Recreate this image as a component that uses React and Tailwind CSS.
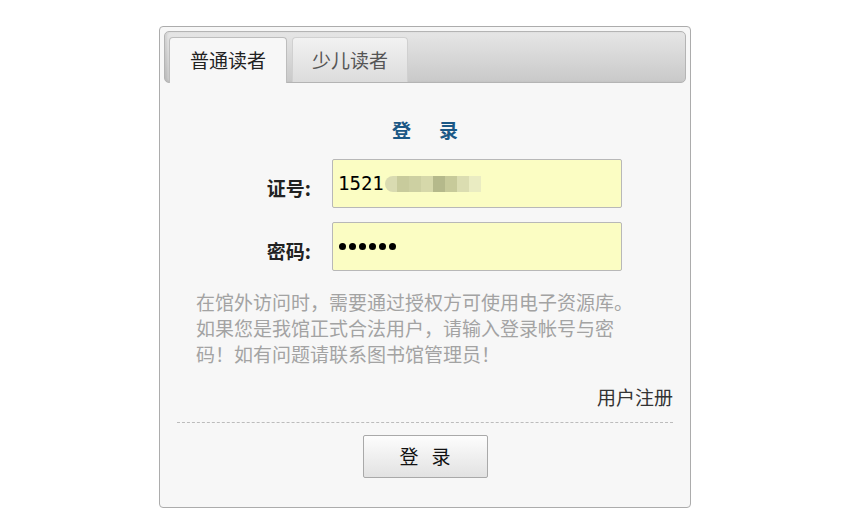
import React from "react";

const cjk = "font-['Noto_Sans_CJK_SC',sans-serif]";

const LoginPanel = () => {
  const blurBlocks = ["#d6d8b0", "#c3c698", "#c9cc9f", "#d2d5a8", "#aeb286", "#c2c596", "#d8dab0", "#e9ebc2"];

  return (
    <div className={`w-[532px] h-[482px] ml-[159px] mt-[26px] border border-[#acacac] rounded-[4px] bg-[#f7f7f7] px-[4px] pt-[4px] ${cjk}`}>
      {/* tabs header */}
      <div className="h-[52px] border border-[#b4b4b4] rounded-[5px] bg-gradient-to-b from-[#e6e6e6] to-[#c9c9c9] shadow-[inset_2px_0_2px_rgba(0,0,0,0.08)] flex items-end gap-[5px] pl-[4px]">
        <div className="-mb-px h-[46px] w-[118px] border border-b-0 border-[#bdbdbd] rounded-t-[4px] bg-[#f7f7f7] flex items-center justify-center text-[19px] text-[#222]">
          普通读者
        </div>
        <div className="h-[45px] w-[116px] border border-b-0 border-[#d0d0d0] rounded-t-[4px] bg-gradient-to-b from-[#f2f2f2] to-[#dcdcdc] flex items-center justify-center text-[19px] text-[#555]">
          少儿读者
        </div>
      </div>

      <div className="px-[13px]">
        {/* title */}
        <div className="mt-[34px] h-[26px] leading-[26px] flex justify-center gap-[28px] text-[19px] font-bold text-[#1b5886]">
          <span>登</span>
          <span>录</span>
        </div>

        {/* form */}
        <div className="mt-[16px] flex items-center">
          <div className="w-[155px] pr-[21px] text-right text-[19px] font-bold text-[#222] pt-[10px]">证号:</div>
          <div className="w-[290px] h-[49px] border border-[#b8b8b8] rounded-[2px] bg-[#fbfdc3] flex items-center pl-[5px]">
            <span className="font-['DejaVu_Sans_Mono',monospace] text-[19px] text-black">1521</span>
            <div className="flex h-[16px] ml-[1px] opacity-90">
              {blurBlocks.map((c, i) => (
                <div
                  key={i}
                  className={`w-[12px] h-full ${i === 0 ? "rounded-l-full" : ""}`}
                  style={{ backgroundColor: c }}
                />
              ))}
            </div>
          </div>
        </div>
        <div className="mt-[14px] flex items-center">
          <div className="w-[155px] pr-[21px] text-right text-[19px] font-bold text-[#222] pt-[10px]">密码:</div>
          <div className="w-[290px] h-[49px] border border-[#b8b8b8] rounded-[2px] bg-[#fbfdc3] flex items-center pl-[6px] gap-[3px]">
            {[0, 1, 2, 3, 4, 5].map((i) => (
              <span key={i} className="w-[7px] h-[7px] rounded-full bg-black" />
            ))}
          </div>
        </div>

        {/* notice */}
        <p className="mt-[18px] ml-[19px] w-[445px] text-[19px] leading-[26px] text-[#a3a3a3]">
          在馆外访问时，需要通过授权方可使用电子资源库。如果您是我馆正式合法用户，请输入登录帐号与密码！如有问题请联系图书馆管理员！
        </p>

        <div className="mt-[17px] h-[26px] leading-[26px] text-right text-[19px] text-[#333]">用户注册</div>

        <div className="mt-[12px] border-t border-dashed border-[#bcbcbc]" />

        <div className="mt-[12px] flex justify-center">
          <button className="w-[125px] h-[43px] border border-[#a9a9a9] rounded-[2px] bg-gradient-to-b from-[#fdfdfd] to-[#e2e2e2] flex items-center justify-center gap-[13px] text-[19px] text-[#111]">
            <span>登</span>
            <span>录</span>
          </button>
        </div>
      </div>
    </div>
  );
};

export default function App() {
  return (
    <div className="w-[867px] h-[526px] bg-white overflow-hidden">
      <div className="pt-px -mt-px">
        <LoginPanel />
      </div>
    </div>
  );
}
